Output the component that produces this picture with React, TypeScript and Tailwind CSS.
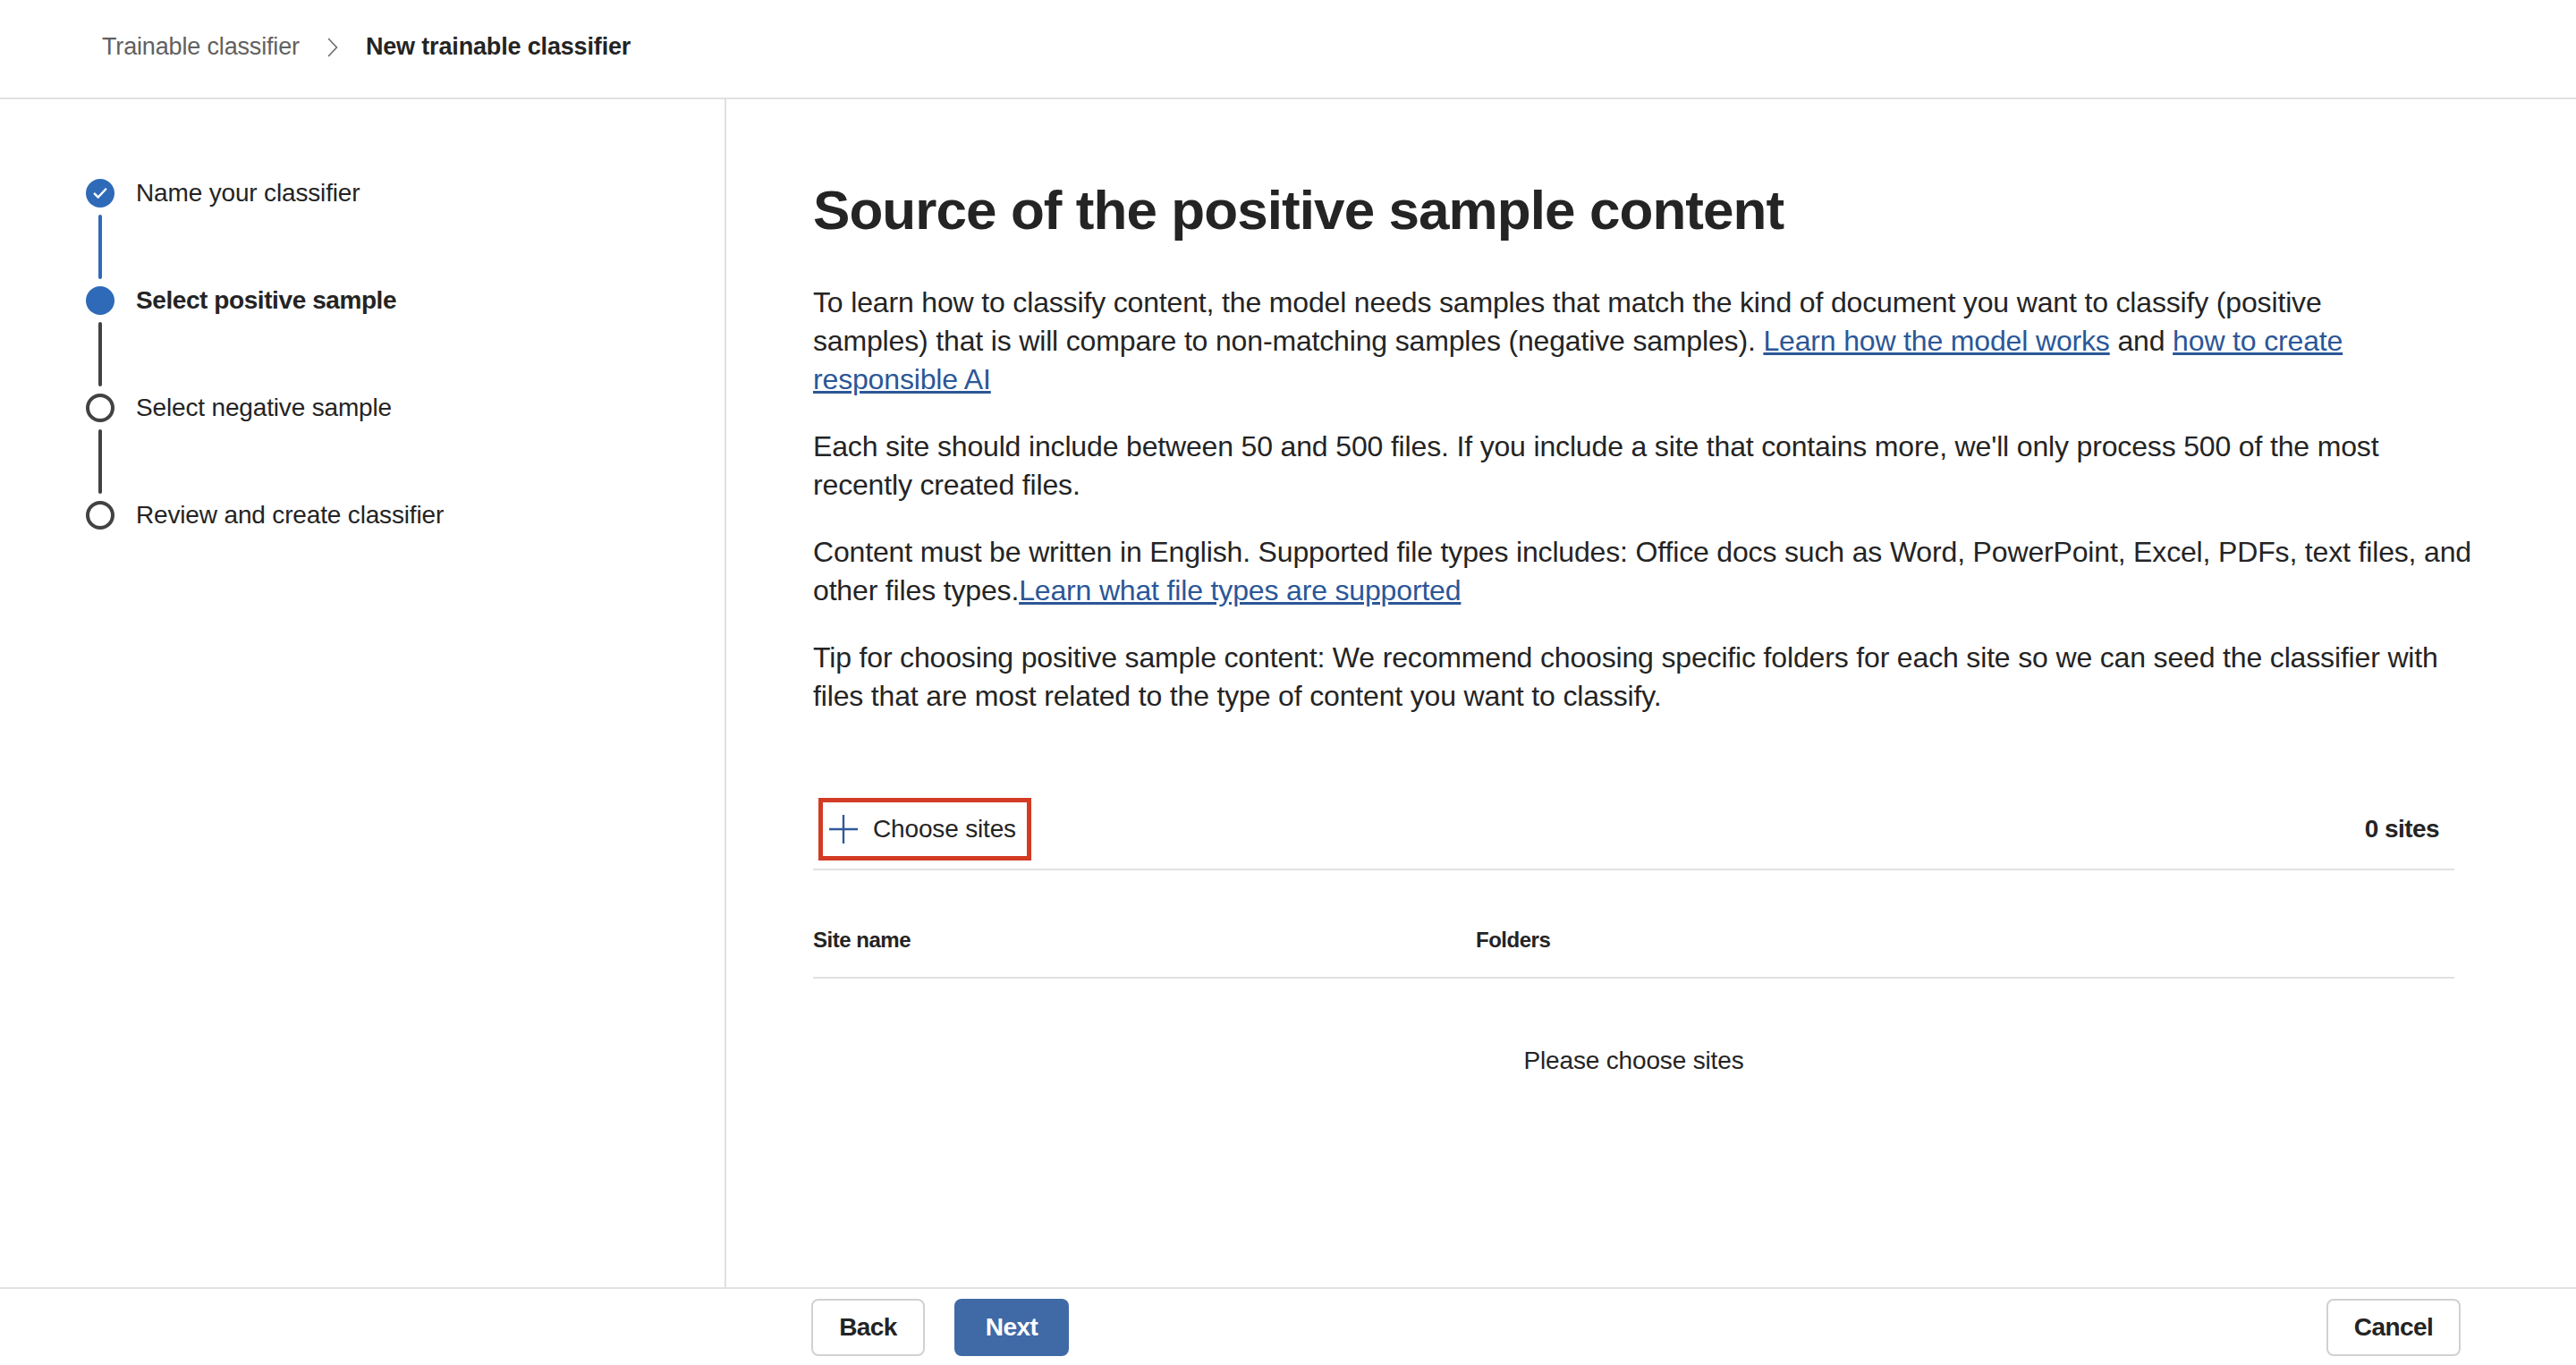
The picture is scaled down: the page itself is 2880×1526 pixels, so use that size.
import { Fragment } from 'react';

const steps = [
    { label: 'Name your classifier', state: 'done' },
    { label: 'Select positive sample', state: 'current' },
    { label: 'Select negative sample', state: 'todo' },
    { label: 'Review and create classifier', state: 'todo' },
];

function StepDot({ state }: { state: string }) {
    if (state === 'done') {
        return (
            <span className="flex h-8 w-8 shrink-0 items-center justify-center rounded-full bg-[#2f6ab8]">
                <svg width="18" height="18" viewBox="0 0 16 16" fill="none">
                    <path d="M2.5 8.5l3.5 3.5 7.5-8" stroke="#fff" strokeWidth="2.2" strokeLinecap="round" strokeLinejoin="round" />
                </svg>
            </span>
        );
    }
    if (state === 'current') {
        return <span className="h-8 w-8 shrink-0 rounded-full bg-[#2f6ab8]" />;
    }
    return <span className="h-8 w-8 shrink-0 rounded-full border-4 border-[#424242] bg-white" />;
}

function Button({ children, primary, className }: { children: string; primary?: boolean; className?: string }) {
    return (
        <button
            type="button"
            className={
                'flex h-16 items-center justify-center rounded-lg text-[28px] font-semibold tracking-[-0.02em] ' +
                (primary ? 'bg-[#3f6aa6] text-white ' : 'border-2 border-[#d1d1d1] bg-white text-[#242424] ') +
                (className ?? '')
            }
        >
            {children}
        </button>
    );
}

export default function App() {
    return (
        <div className="flex h-[1526px] w-[2880px] flex-col overflow-hidden bg-white font-['Liberation_Sans',Arial,sans-serif] tracking-[-0.01em] text-[#242424]">
            {/* header / breadcrumb */}
            <header className="flex h-[111px] shrink-0 items-center gap-[31px] border-b-2 border-[#e1e1e1] pb-[4px] pl-[114px]">
                <span className="text-[27px] text-[#616161]">Trainable classifier</span>
                <svg width="12" height="22" viewBox="0 0 12 22" fill="none">
                    <path d="M1.5 1.5l9 9.5-9 9.5" stroke="#6b6b6b" strokeWidth="1.6" strokeLinecap="round" strokeLinejoin="round" />
                </svg>
                <span className="text-[27px] font-semibold">New trainable classifier</span>
            </header>

            <div className="flex min-h-0 flex-1">
                {/* steps */}
                <aside className="w-[812px] shrink-0 border-r-2 border-[#e1e1e1] pl-[96px] pt-[89px]">
                    {steps.map((s, i) => (
                        <Fragment key={s.label}>
                            <div className="flex h-8 items-center gap-6">
                                <StepDot state={s.state} />
                                <span
                                    className={
                                        'text-[28px] leading-8 ' + (s.state === 'current' ? 'font-semibold tracking-[-0.015em]' : '')
                                    }
                                >
                                    {s.label}
                                </span>
                            </div>
                            {i < steps.length - 1 && (
                                <div
                                    className={
                                        'my-2 ml-[14px] h-[72px] w-1 rounded-full ' +
                                        (s.state === 'done' ? 'bg-[#2f6ab8]' : 'bg-[#424242]')
                                    }
                                />
                            )}
                        </Fragment>
                    ))}
                </aside>

                {/* main */}
                <main className="flex-1 pl-[97px] pt-[84px]">
                    <div className="w-[1835px]">
                        <h1 className="text-[62px] font-semibold leading-[80px] tracking-[-0.015em]">
                            Source of the positive sample content
                        </h1>

                        <div className="mt-[42px] flex flex-col gap-[32px] whitespace-nowrap text-[32px] leading-[43px]">
                            <p>
                                To learn how to classify content, the model needs samples that match the kind of document you want to classify (positive
                                <br />
                                samples) that is will compare to non-matching samples (negative samples).{' '}
                                <a href="#" className="text-[#2b5797] underline">
                                    Learn how the model works
                                </a>{' '}
                                and{' '}
                                <a href="#" className="text-[#2b5797] underline">
                                    how to create
                                    <br />
                                    responsible AI
                                </a>
                            </p>
                            <p>
                                Each site should include between 50 and 500 files. If you include a site that contains more, we'll only process 500 of the most
                                <br />
                                recently created files.
                            </p>
                            <p>
                                Content must be written in English. Supported file types includes: Office docs such as Word, PowerPoint, Excel, PDFs, text files, and
                                <br />
                                other files types.
                                <a href="#" className="text-[#2b5797] underline">
                                    Learn what file types are supported
                                </a>
                            </p>
                            <p>
                                Tip for choosing positive sample content: We recommend choosing specific folders for each site so we can seed the classifier with
                                <br />
                                files that are most related to the type of content you want to classify.
                            </p>
                        </div>

                        {/* toolbar */}
                        <div className="mt-[83px] flex h-[90px] items-center justify-between border-b-2 border-[#e1e1e1]">
                            <button
                                type="button"
                                className="ml-[6px] flex h-[70px] items-center gap-[17px] border-[5px] border-[#d33b24] pl-[7px] pr-[12px] text-[28px]"
                            >
                                <svg width="32" height="32" viewBox="0 0 32 32" fill="none">
                                    <path d="M16 0v32M0 16h32" stroke="#2f5a9a" strokeWidth="2.4" />
                                </svg>
                                Choose sites
                            </button>
                            <span className="pr-[17px] text-[28px] font-semibold tracking-[-0.02em]">0 sites</span>
                        </div>

                        {/* table */}
                        <div className="mt-[37px] flex h-[84px] items-center border-b-2 border-[#e1e1e1] text-[24px] font-semibold tracking-[-0.02em]">
                            <span className="w-[741px]">Site name</span>
                            <span>Folders</span>
                        </div>
                        <p className="mt-[72px] text-center text-[28px] leading-[40px]">Please choose sites</p>
                    </div>
                </main>
            </div>

            {/* footer */}
            <footer className="flex h-[87px] shrink-0 items-center border-t-2 border-[#e1e1e1]">
                <div className="w-[812px] shrink-0" />
                <div className="flex flex-1 items-center justify-between pl-[95px] pr-[129px]">
                    <div className="flex items-center gap-[33px]">
                        <Button className="w-[127px]">Back</Button>
                        <Button primary className="w-[128px]">
                            Next
                        </Button>
                    </div>
                    <Button className="w-[150px]">Cancel</Button>
                </div>
            </footer>
        </div>
    );
}
